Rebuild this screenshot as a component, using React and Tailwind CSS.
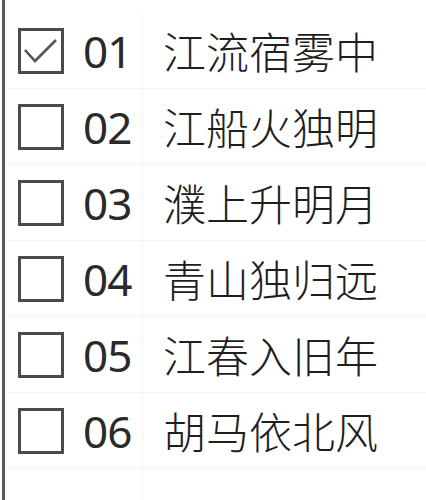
import React from 'react';

const rows = [
    { id: '01', text: '江流宿雾中', checked: true },
    { id: '02', text: '江船火独明', checked: false },
    { id: '03', text: '濮上升明月', checked: false },
    { id: '04', text: '青山独归远', checked: false },
    { id: '05', text: '江春入旧年', checked: false },
    { id: '06', text: '胡马依北风', checked: false },
];

const CheckBox = ({ checked }) => (
    <div className="w-[46px] h-[46px] shrink-0 border-[3px] border-[#4a4a4a] bg-white flex items-center justify-center">
        {checked && (
            <svg width="40" height="40" viewBox="0 0 40 40" fill="none">
                <polyline points="4,19 14,30 35,9" stroke="#555" strokeWidth="2.6" strokeLinejoin="miter" />
            </svg>
        )}
    </div>
);

export default function App() {
    return (
        <div
            className="w-[426px] h-[500px] bg-white flex overflow-hidden text-[#222]"
            style={{ fontFamily: '"Noto Sans", "Noto Sans CJK SC", sans-serif' }}
        >
            {/* left edge */}
            <div className="w-[2px] shrink-0 bg-white" />
            <div className="w-[3px] shrink-0 bg-[#5a5a5a]" />

            <div className="flex-1 flex flex-col pt-[13px]">
                {rows.map((r) => (
                    <div key={r.id} className="flex h-[76px] border-b border-[#f2f2f2]">
                        <div className="w-[138px] shrink-0 flex items-center pl-[13px] gap-[19px] border-r border-[#f3f3f3]">
                            <CheckBox checked={r.checked} />
                            <span className="text-[44px] leading-none tracking-[-1px] text-[#2a2a2a]">{r.id}</span>
                        </div>
                        <div className="flex-1 flex items-center pl-[20px]">
                            <span
                                className="text-[43px] leading-none font-light text-[#1e1e1e]"
                                style={{ fontFamily: '"Noto Sans CJK SC", sans-serif' }}
                            >
                                {r.text}
                            </span>
                        </div>
                    </div>
                ))}
                <div className="flex flex-1">
                    <div className="w-[138px] shrink-0 border-r border-[#f3f3f3]" />
                </div>
            </div>
        </div>
    );
}
